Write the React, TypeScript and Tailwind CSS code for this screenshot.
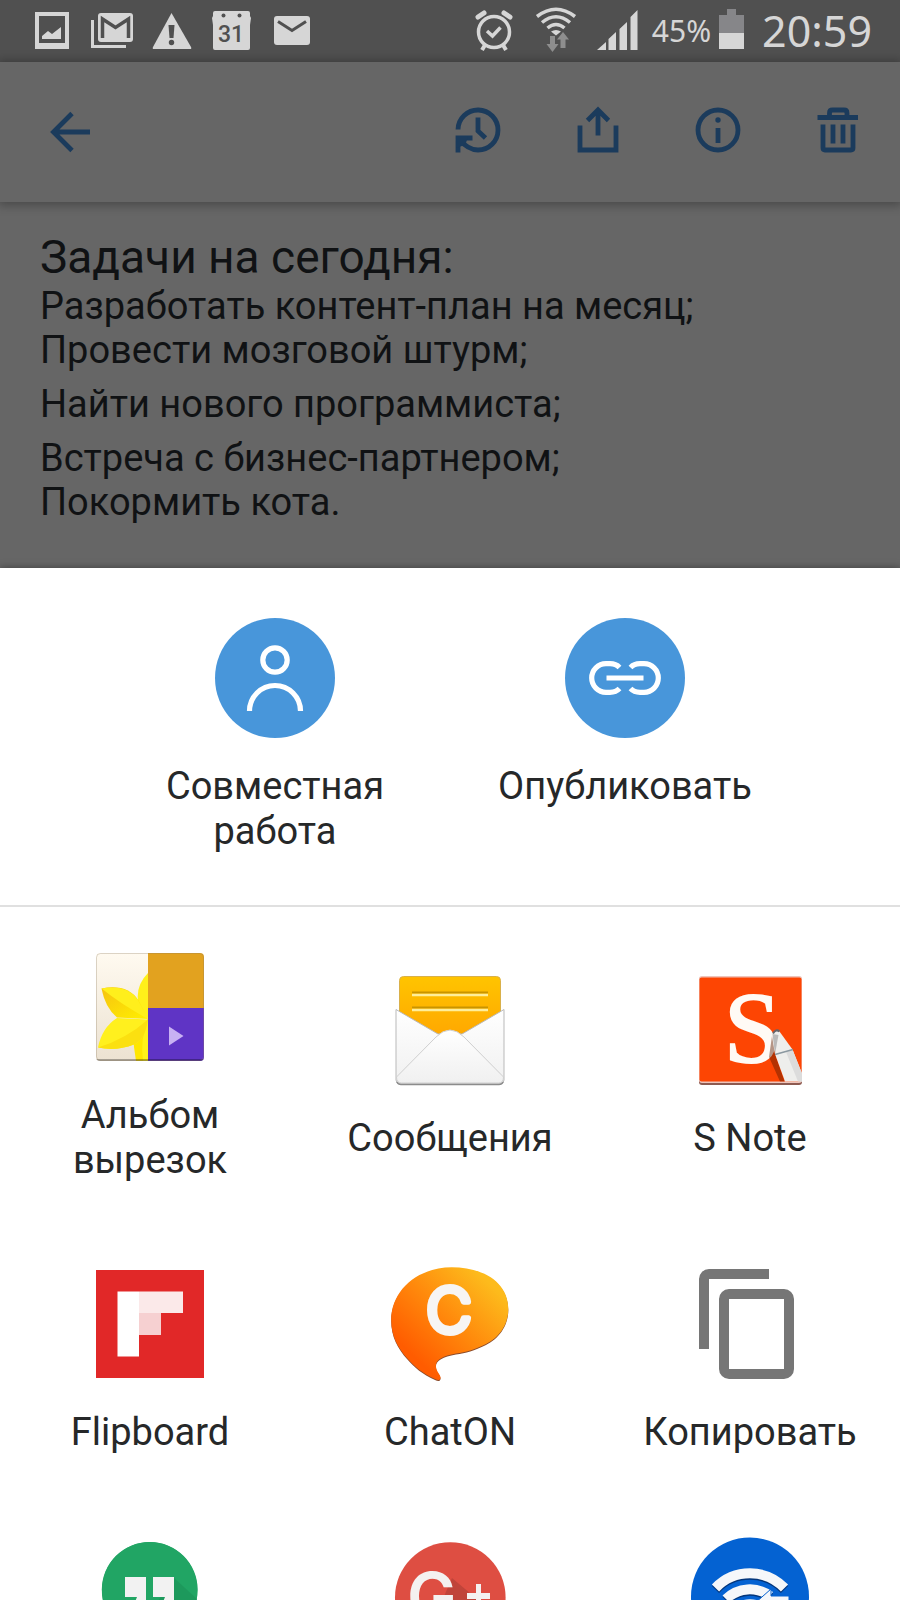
import React from 'react'

interface ShareTarget {
  name: string
  label?: string
  icon: React.ReactNode
}

const StatusIcon: React.FC<{ children: React.ReactNode }> = ({ children }) => (
  <svg viewBox="0 0 60 62" className="w-[60px] h-[62px] shrink-0" fill="#d6d6d6" aria-hidden="true">
    {children}
  </svg>
)

const StatusBar: React.FC = () => (
  <div className="flex items-center justify-between shrink-0 h-[62px] pl-[22px] pr-7 bg-[#505050] text-[#d6d6d6]">
    <div className="flex">
      <StatusIcon>
        <path fillRule="evenodd" d="M13 12h34v37H13zM17 16v27h26V16z" />
        <path d="M20 39v-3l6-5 4 3 9-7v12z" />
      </StatusIcon>
      <StatusIcon>
        <rect x="16" y="13" width="35" height="29" rx="3" />
        <path d="M20.500 38V19l13 8.500 13-8.500v19" fill="none" stroke="#505050" strokeWidth="3.500" />
        <path d="M10.500 20v26.500H44" fill="none" stroke="#d6d6d6" strokeWidth="3" />
      </StatusIcon>
      <StatusIcon>
        <path d="M29.500 13 49 47q1 2-1 2H12q-2 0-1-2z" />
        <path d="M26.500 25h6l-1 13h-4z" fill="#505050" />
        <circle cx="29.500" cy="42.500" r="2.700" fill="#505050" />
      </StatusIcon>
      <StatusIcon>
        <path d="M13 11h33q2 0 2 2v3l1 2-1 7v23q0 2-2 2H13q-2 0-2-2V25l-1-7 1-2v-3q0-2 2-2z" />
        <circle cx="21.500" cy="15.500" r="2" fill="#505050" />
        <circle cx="37.500" cy="15.500" r="2" fill="#505050" />
        <text x="29" y="42" textAnchor="middle" fill="#505050" className="font-['Roboto',sans-serif] text-[23px] font-medium">31</text>
      </StatusIcon>
      <StatusIcon>
        <rect x="12" y="16" width="36" height="29" rx="3" />
        <path d="m16 21.500 14 9 14-9" fill="none" stroke="#505050" strokeWidth="3" />
      </StatusIcon>
    </div>
    <div className="flex items-center font-['Noto_Sans',sans-serif]">
      <StatusIcon>
        <circle cx="30" cy="32" r="15.500" fill="none" stroke="#d6d6d6" strokeWidth="3.500" />
        <path d="m23 31 5.500 5 8-8.500" fill="none" stroke="#d6d6d6" strokeWidth="3.500" />
        <path d="m14 17 6-4M46 17l-6-4" stroke="#d6d6d6" strokeWidth="5" strokeLinecap="round" />
        <path d="m21 45-3 5M39 45l3 5" stroke="#d6d6d6" strokeWidth="4" />
      </StatusIcon>
      <StatusIcon>
        <g fill="none" stroke="#d6d6d6" strokeWidth="3.500">
          <path d="M13 16.500q19-14.500 38 0" />
          <path d="M18 22.500q14-11.500 28 0" />
          <path d="M23.500 28q8.500-7 17 0" />
        </g>
        <path d="M27 31.500q5-3 10 0l-5 4z" />
        <path d="M26 36h5v8h3.500l-6 8-6-8H26zM36.500 48v-8.500H33l6-7.500 6 7.500h-3.500V48z" fill="#8e8e8e" />
      </StatusIcon>
      <StatusIcon>
        <path d="M13 50l9-8v8zM24.500 50V39l7.500-7v18zM35.500 50V29l7.500-7v28zM46.500 50V17l7-7v40z" />
      </StatusIcon>
      <span className="ml-2 text-[30px] leading-[40px]">45%</span>
      <svg viewBox="0 0 25 62" className="w-[25px] h-[62px] ml-2 shrink-0" aria-hidden="true">
        <path d="M0 15h8V9h9v6h8v19H0z" fill="#868689" />
        <path d="M0 33h25v16H0z" fill="#d6d6d6" />
      </svg>
      <span className="ml-[18px] text-[43px] leading-[60px]">20:59</span>
    </div>
  </div>
)

const BarButton: React.FC<{ label: string; children: React.ReactNode }> = ({ label, children }) => (
  <button type="button" aria-label={label} className="text-[#1b3b5c]">
    <svg viewBox="0 0 48 48" className="size-12" fill="none" stroke="currentColor" strokeWidth="4.800" aria-hidden="true">
      {children}
    </svg>
  </button>
)

const AppBar: React.FC = () => (
  <header className="relative flex items-center justify-between shrink-0 h-[140px] pl-[46px] pr-[38px] pb-1 bg-[#666666] shadow-[0_1px_10px_2px_rgba(0,0,0,0.3)]">
    <BarButton label="Назад">
      <path d="M26 7.500 7.500 26 26 44.500M8 26h36" />
    </BarButton>
    <div className="flex gap-[72px]">
      <BarButton label="История">
        <path d="M4 23.500A20 20 0 1 1 24 44Q14 44 5 33" />
        <path d="M4 46.500V32h14.500M24 11.500V25l7.500 7" />
        <path d="M2 30h12l-2 7-4 3-6 2z" fill="currentColor" stroke="none" />
      </BarButton>
      <BarButton label="Поделиться">
        <path d="M6 19.500V44h36V19.500M24 29.500V5M13.500 14.500 24 4l10.500 10.500" />
      </BarButton>
      <BarButton label="Сведения">
        <circle cx="24" cy="24" r="20" />
        <path d="M24 22v15" />
        <circle cx="24" cy="14" r="2.700" fill="currentColor" stroke="none" />
      </BarButton>
      <BarButton label="Удалить">
        <path d="M3.500 11.500h40.500M15.500 11V7q0-3 3-3H30q3 0 3 3v4M9 18.500V42q0 2 2 2h26q2 0 2-2V18.500M19 18.500v19M29 18.500v19" />
      </BarButton>
    </div>
  </header>
)

const Note: React.FC = () => (
  <main className="shrink-0 px-10 pt-7 pb-11 bg-[#666666] text-[#101214] text-[38px] leading-[44px]">
    <h1 className="text-[46px] leading-[54px]">Задачи на сегодня:</h1>
    <p>Разработать контент-план на месяц;</p>
    <p>Провести мозговой штурм;</p>
    <p className="my-[10px]">Найти нового программиста;</p>
    <p>Встреча с бизнес-партнером;</p>
    <p>Покормить кота.</p>
  </main>
)

const PersonIcon = (
  <>
    <circle cx="60" cy="60" r="60" fill="#4896da" />
    <g fill="none" stroke="#fff" strokeWidth="5.200">
      <circle cx="60" cy="42" r="12.200" />
      <path d="M34.500 93a25.500 25.500 0 0 1 51 0" />
    </g>
  </>
)

const LinkIcon = (
  <>
    <circle cx="60" cy="60" r="60" fill="#4896da" />
    <g fill="none" stroke="#fff" strokeWidth="5.200">
      <path d="M54.500 49.500Q51 45.700 45 45.700h-4a14.300 14.300 0 0 0 0 28.600h4q6 0 9.500-3.800" />
      <path d="M65.500 49.500q3.500-3.800 9.500-3.800h4a14.300 14.300 0 0 1 0 28.600h-4q-6 0-9.500-3.800" />
      <path d="M41.500 60h37" />
    </g>
  </>
)

const ScrapbookIcon = (
  <>
    <defs>
      <linearGradient id="paper" x1="0" y1="0" x2="0" y2="1">
        <stop offset="0" stopColor="#fffaf0" />
        <stop offset="1" stopColor="#ece2d2" />
      </linearGradient>
      <linearGradient id="petal" x1="0" y1="0" x2="1" y2="1">
        <stop offset="0" stopColor="#f6c211" />
        <stop offset="1" stopColor="#fff000" />
      </linearGradient>
      <clipPath id="album">
        <rect x="6" y="6" width="108" height="108" rx="4" />
      </clipPath>
    </defs>
    <g clipPath="url(#album)">
      <rect x="6" y="6" width="53" height="108" fill="url(#paper)" />
      <path d="M58 26Q46 38 48 54l10 18z" fill="#fff01a" />
      <path d="M58 72Q42 84 44 100l2 14h12z" fill="#ffe600" />
      <path d="M58 72Q50 92 53 114h5z" fill="#fff21a" />
      <path d="M11.500 41.500q26-5 37 12l9.500 18.500-31-1.500q-12-10-15.500-29z" fill="url(#petal)" />
      <path d="M11.500 41.500q20 16 46.500 30.500L48 53q-11-16-36.500-11.500z" fill="#ffef1c" />
      <path d="M8 100.500q4-20 19-29.500l31 1.500q-3 21-14 25-18 7-36 3z" fill="#fff01e" />
      <path d="M8 100.500Q36 92 58 72.500q-3 21-14 25-18 7-36 3z" fill="#fbe010" />
      <path d="M58 6h56v55H58z" fill="#e2a21f" />
      <path d="M58 61h56v53H58z" fill="#5f34c5" />
      <path d="M79 79.500v19L93.500 89z" fill="#c8b1f3" />
      <path d="M6 112h108v2H6z" fill="#000" opacity=".3" />
    </g>
    <rect x="6.500" y="6.500" width="107" height="107" rx="4" fill="none" stroke="#8a7a60" strokeOpacity=".3" />
  </>
)

const MessagesIcon = (
  <>
    <defs>
      <linearGradient id="sheet" x1="0" y1="0" x2="0" y2="1">
        <stop offset="0" stopColor="#ffc400" />
        <stop offset="1" stopColor="#ffa000" />
      </linearGradient>
      <linearGradient id="envelope" x1="0" y1="0" x2="0" y2="1">
        <stop offset="0" stopColor="#ffffff" />
        <stop offset="1" stopColor="#f0f0f0" />
      </linearGradient>
    </defs>
    <rect x="9.500" y="6.500" width="101" height="75" rx="4" fill="url(#sheet)" stroke="#d9b04a" />
    <path d="M22 22.500h76M22 37.500h76" stroke="#c99400" strokeWidth="2" />
    <path d="M22 25h76M22 40h76" stroke="#ffee9a" strokeWidth="2.500" />
    <path d="M6 39.500 48 64h24l42-24.500V110q0 4-4 4H10q-4 0-4-4z" fill="url(#envelope)" stroke="#b9b9b9" />
    <path d="M6.500 107 46 67q14-14 28 0l39.500 40q0 6-5 6h-97q-5 0-5-6z" fill="url(#envelope)" stroke="#cfcfcf" />
    <path d="M7 112q1 2.500 4 2.500h98q3 0 4-2.500" fill="none" stroke="#8c8c8c" strokeWidth="1.500" />
  </>
)

const SNoteIcon = (
  <>
    <rect x="9" y="7" width="103" height="108" rx="3" fill="#8d5a50" />
    <rect x="9" y="6" width="103" height="107" rx="3" fill="#eec4bb" />
    <rect x="9.500" y="7.500" width="102" height="104" rx="2" fill="#fd4503" />
    <text x="34" y="93" fill="#fffaf5" stroke="#fffaf5" strokeWidth="2" className="font-['Liberation_Serif',serif] text-[102px]">S</text>
    <path d="m82 66 3 18 9.500 27.500H90L79 87z" fill="#5a1a00" opacity=".45" />
    <path d="M82.500 64q3-6 7-2.500l13 18 9.500 24v8H95L85 84z" fill="#eeeeec" />
    <path d="m96 82 6.500-2.500 9.500 24v8h-4z" fill="#dcdcdc" />
    <path d="m82.500 64 6 1-3.500 19z" fill="#b9b9b9" />
    <path d="m85 84.500 18-5" stroke="#8b98a0" strokeWidth="1.500" />
    <path d="M83 63.500q3-5 6.500-2" fill="none" stroke="#65656b" strokeWidth="2" />
  </>
)

const FlipboardIcon = (
  <>
    <path d="M6 6h108v108H6z" fill="#e12828" />
    <path d="M27.500 27.500H49v65H27.500z" fill="#fff" />
    <path d="M49 27.500h44V49H49z" fill="#fbe9e9" />
    <path d="M49 49h22v22H49z" fill="#f6d0d1" />
  </>
)

const bubble =
  'M61.700 3.300C93 3.300 118.300 18 118.300 45c0 17-10.300 29-22.300 35-12 6-20 8-30 9.500-14 2.500-21 6.500-20 13.500.5 5 5 8 4.500 11s-3 2-5.500 1C32 109 25 103 17 94 8 84 1.200 72 1.200 56 1.200 26 28 3.300 61.700 3.300z'

const ChatOnIcon = (
  <>
    <defs>
      <linearGradient id="chat" x1="0.850" y1="0.150" x2="0.200" y2="0.800">
        <stop offset="0" stopColor="#fdbb1c" />
        <stop offset="0.500" stopColor="#ff8a0c" />
        <stop offset="1" stopColor="#ff5c00" />
      </linearGradient>
    </defs>
    <path d={bubble} transform="translate(0 1)" fill="#8a4a2a" />
    <path d={bubble} fill="url(#chat)" />
    <text x="36" y="69" fill="#f7f5f3" stroke="#f7f5f3" strokeWidth="6" strokeLinejoin="round" className="font-['Inter',sans-serif] text-[63px] font-light">C</text>
  </>
)

const CopyIcon = (
  <g fill="none" stroke="#767676" strokeWidth="10">
    <path d="M14 85V15a5 5 0 0 1 5-5h60" />
    <rect x="34" y="30" width="65" height="80" rx="5" />
  </g>
)

const HangoutsIcon = (
  <>
    <path d="M60 6a47.700 47.700 0 0 1 0 95.400V116C30 104 12 82 12 54A48 48 0 0 1 60 6z" fill="#21a564" />
    <circle cx="59.500" cy="53.700" r="47.700" fill="#21a564" />
    <path d="m83 41 24 22-16 30-34-10z" fill="#1d995c" />
    <path d="M35 41h21v23l-6 12h-9l6-15H35zM63 41h21v23l-6 12h-9l6-15H63z" fill="#f2f2f2" />
  </>
)

const GooglePlusIcon = (
  <>
    <circle cx="60.300" cy="61.500" r="55.300" fill="#de4e42" />
    <path d="m62 42 50 42-20 24-50-20z" fill="#c0443a" />
    <text x="17" y="84" fill="#f4f1f0" className="font-['Inter',sans-serif] text-[66px] font-semibold">G</text>
    <path d="M86 48h5v9h9v6h-9v9h-5v-9h-9v-6h9z" fill="#f4f1f0" />
  </>
)

const WifiDirectIcon = (
  <>
    <circle cx="60" cy="60.500" r="59" fill="#0462d2" />
    <g fill="none" strokeWidth="10">
      <path d="M25.500 53.500a48 48 0 0 1 69 0M36 64.500a34 34 0 0 1 44-3" stroke="#03357a" />
      <path d="M25.500 52a48 48 0 0 1 69 0M36 63a34 34 0 0 1 44-3" stroke="#f5f7fa" />
      <path d="M47 73a20 20 0 0 1 26 0" stroke="#f5f7fa" />
    </g>
    <path d="m81 53-17 15 17 15v-8h18V60H81z" fill="#f5f7fa" stroke="#0462d2" />
  </>
)

const primaryTargets: ShareTarget[] = [
  { name: 'collaborate', label: 'Совместная работа', icon: PersonIcon },
  { name: 'publish', label: 'Опубликовать', icon: LinkIcon },
]

const appTargets: ShareTarget[] = [
  { name: 'scrapbook', label: 'Альбом вырезок', icon: ScrapbookIcon },
  { name: 'messages', label: 'Сообщения', icon: MessagesIcon },
  { name: 'snote', label: 'S Note', icon: SNoteIcon },
  { name: 'flipboard', label: 'Flipboard', icon: FlipboardIcon },
  { name: 'chaton', label: 'ChatON', icon: ChatOnIcon },
  { name: 'copy', label: 'Копировать', icon: CopyIcon },
  { name: 'Hangouts', icon: HangoutsIcon },
  { name: 'Google+', icon: GooglePlusIcon },
  { name: 'Wi-Fi Direct', icon: WifiDirectIcon },
]

const ShareButton: React.FC<{ target: ShareTarget }> = ({ target }) => (
  <button
    type="button"
    aria-label={target.label ? undefined : target.name}
    className="flex flex-col items-center gap-[26px] px-6 text-[38px] leading-[45px] text-[#262829]"
  >
    <svg viewBox="0 0 120 120" className="size-[120px] shrink-0" aria-hidden="true">
      {target.icon}
    </svg>
    {target.label && <span>{target.label}</span>}
  </button>
)

const ShareSheet: React.FC = () => (
  <section className="relative flex-1 min-h-0 bg-white shadow-[0_0_8px_rgba(0,0,0,0.4)]">
    <div className="grid grid-cols-2 items-start px-[100px] pt-[50px] pb-[51px] border-b-2 border-[#e0e0e0]">
      {primaryTargets.map((target) => (
        <ShareButton key={target.name} target={target} />
      ))}
    </div>
    <div className="grid grid-cols-3 items-center gap-y-[81px] py-10">
      {appTargets.map((target) => (
        <ShareButton key={target.name} target={target} />
      ))}
    </div>
  </section>
)

export default function App() {
  return (
    <div className="flex flex-col h-screen overflow-hidden font-['Roboto',sans-serif]">
      <StatusBar />
      <AppBar />
      <Note />
      <ShareSheet />
    </div>
  )
}
